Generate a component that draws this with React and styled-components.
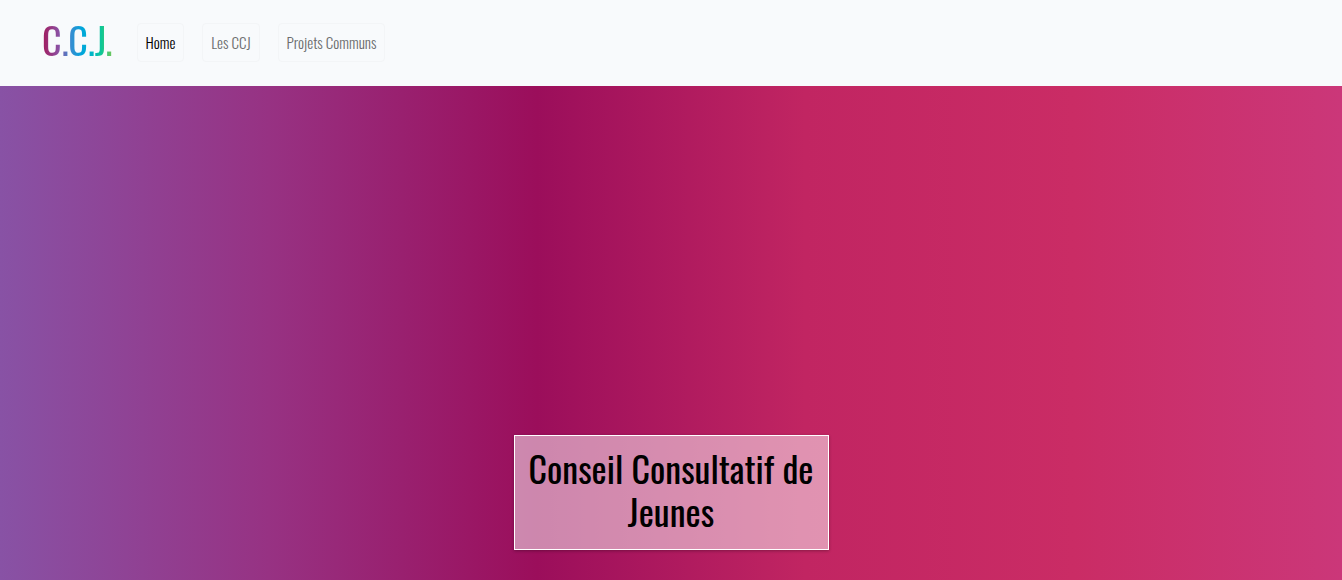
import React from "react";
import styled, { createGlobalStyle } from "styled-components";

const GlobalStyle = createGlobalStyle`
  *, *::before, *::after { box-sizing: border-box; }
  html, body, #root { height: 100%; }
  body {
    margin: 0;
    background: #f8fafc;
    font-family: Oswald, "Liberation Sans Narrow", "Liberation Sans", sans-serif;
    font-size: 15px;
    font-weight: 300;
    line-height: 21px;
  }
`;

const Page = styled.div`
  min-height: 100%;
  display: flex;
  flex-direction: column;
`;

const Navbar = styled.header`
  display: flex;
  align-items: center;
  gap: 24px;
  padding: 15px 42px 17px;
  min-height: 86px;
  background: #f8fafc;
`;

const Brand = styled.a`
  padding-bottom: 6px;
  font-size: 38px;
  font-weight: 400;
  line-height: 48px;
  text-decoration: none;
  color: transparent;
  background: linear-gradient(90deg, #a3195b, #8a52a5 24%, #3b8bd0 40%, #00a5dc 56%, #00b8c4 72%, #0fc795 84%, #7cc653);
  background-clip: text;
  -webkit-background-clip: text;
`;

const NavList = styled.nav`
  display: flex;
  gap: 18px;
`;

const NavLink = styled.a`
  padding: 8px;
  border: 1px solid #f3f5f7;
  border-radius: 4px;
  text-decoration: none;
  white-space: nowrap;
  color: ${({ $active }) => ($active ? "#000" : "#6c6d6e")};
`;

const Hero = styled.main`
  flex: 1;
  display: flex;
  flex-direction: column;
  align-items: center;
  justify-content: flex-end;
  padding: 30px 16px;
  background: linear-gradient(90deg, #8852a5, #973283 20%, #9b0e5b 40%, #c12562 60%, #ca2c65 80%, #cb3779);
`;

const TitleCard = styled.div`
  width: 100%;
  max-width: 315px;
  padding: 10px 10px 17px;
  border: 1px solid #fff;
  background: rgba(255, 255, 255, 0.5);
  box-shadow: 0 1px 3px rgba(0, 0, 0, 0.3);
`;

const Title = styled.h1`
  margin: 0;
  font-size: 36px;
  font-weight: 400;
  line-height: 43px;
  text-align: center;
  color: #000;
`;

const links = [
  { label: "Home", href: "#home", active: true },
  { label: "Les CCJ", href: "#ccj" },
  { label: "Projets Communs", href: "#projets" },
];

export default function App() {
  return (
    <>
      <GlobalStyle />
      <Page>
        <Navbar>
          <Brand href="#home">C.C.J.</Brand>
          <NavList>
            {links.map(({ label, href, active }) => (
              <NavLink key={href} href={href} $active={active} aria-current={active ? "page" : undefined}>
                {label}
              </NavLink>
            ))}
          </NavList>
        </Navbar>
        <Hero>
          <TitleCard>
            <Title>Conseil Consultatif de Jeunes</Title>
          </TitleCard>
        </Hero>
      </Page>
    </>
  );
}
